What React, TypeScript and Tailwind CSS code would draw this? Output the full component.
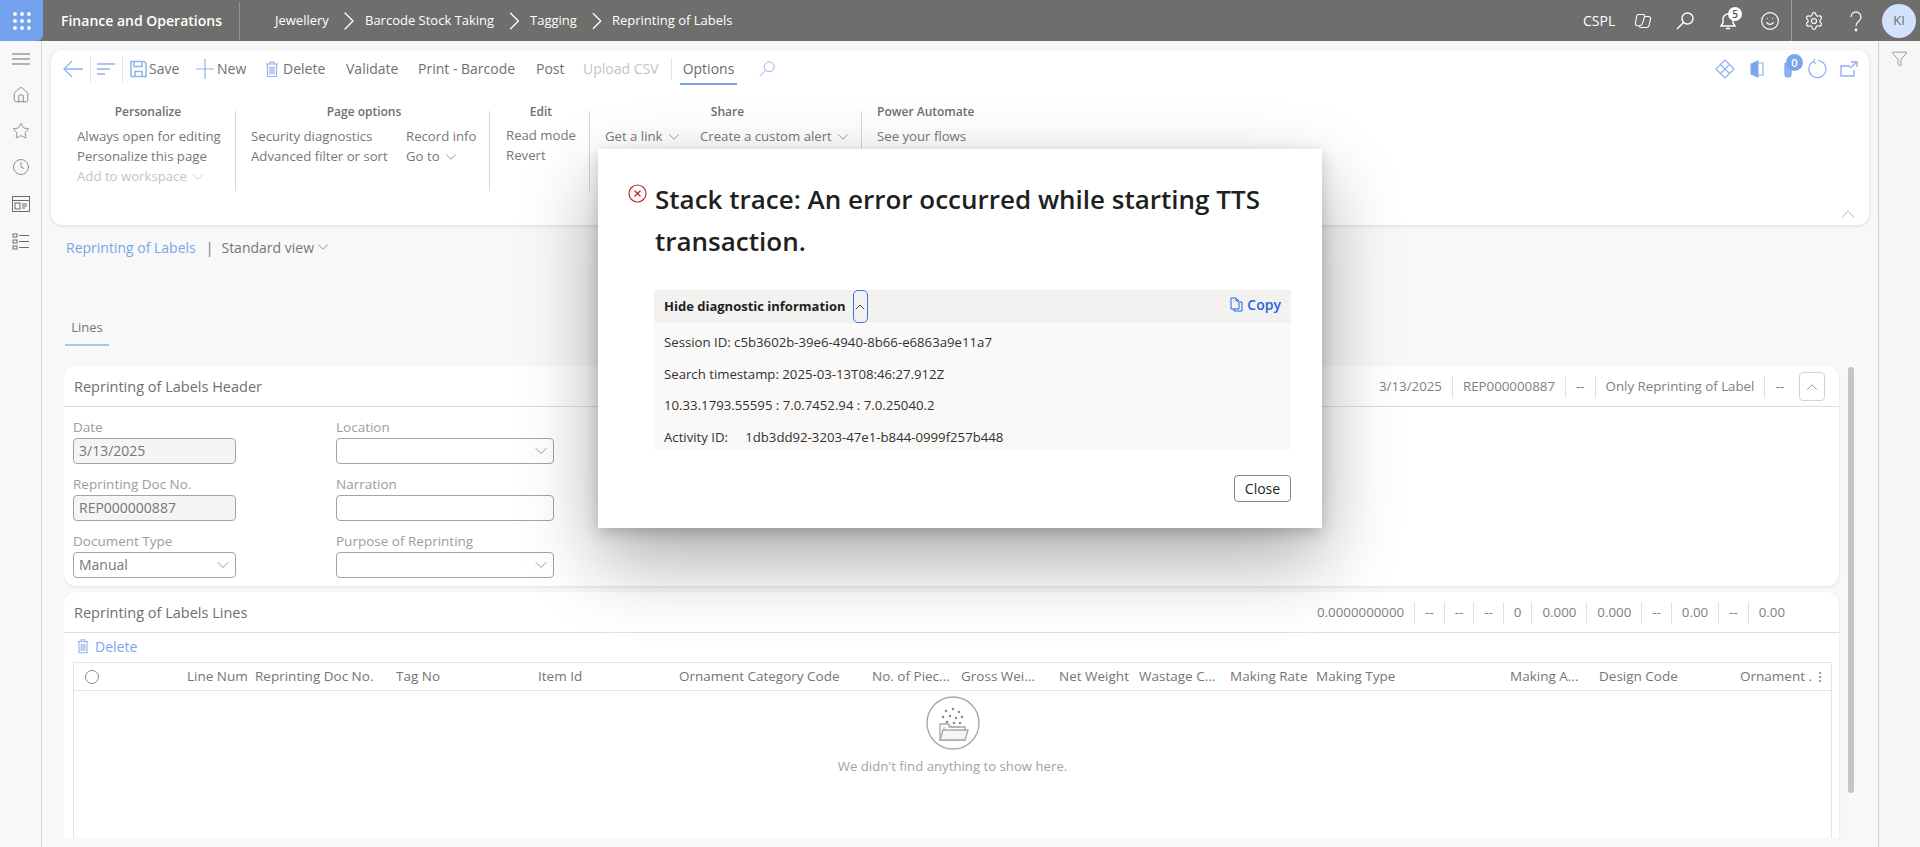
import React from "react";
import { ChevronDown, ChevronUp, ChevronRight, Home, Star, Clock, Settings, Smile, Filter, MoreVertical } from "lucide-react";

const font = { fontFamily: '"Open Sans","Noto Sans",sans-serif' };

function Lens({ size = 22, color = "currentColor", sw = 1.3 }: { size?: number; color?: string; sw?: number }) {
  return (
    <svg width={size} height={size} viewBox="0 0 20 20" fill="none" stroke={color} strokeWidth={sw}>
      <circle cx="12.5" cy="7.5" r="5.5" />
      <path d="M8.5 11.5 2 18" />
    </svg>
  );
}

function Trash({ size = 18, color = "#8fb2f0", className = "" }: { size?: number; color?: string; className?: string }) {
  return (
    <svg width={size} height={size} viewBox="0 0 18 18" fill="none" stroke={color} strokeWidth="1.2" className={className}>
      <path d="M3 4h12M7 4V2h4v2M4.5 4v12.5h9V4M7 6.5v8M9 6.5v8M11 6.5v8" />
    </svg>
  );
}

function TopBar() {
  return (
    <div className="flex h-[41px] shrink-0 items-center bg-[#6e6e6c] text-white">
      <div className="flex h-[41px] w-[43px] items-center justify-center rounded-br-[6px] bg-[#74a1ee]">
        <svg width="18" height="18" viewBox="0 0 18 18" fill="white">
          {[2, 9, 16].map((y) => [2, 9, 16].map((x) => <circle key={`${x}-${y}`} cx={x} cy={y} r="1.9" />))}
        </svg>
      </div>
      <span className="ml-[18px] w-[178px] text-[14px] font-semibold">Finance and Operations</span>
      <span className="h-[38px] w-px bg-[#8f8f8d]" />
      <nav className="ml-[35px] flex items-center text-[13px]">
        <span className="w-[58px]">Jewellery</span>
        <ChevronRight size={32} strokeWidth={1} className="w-[32px]" />
        <span className="w-[134px]">Barcode Stock Taking</span>
        <ChevronRight size={32} strokeWidth={1} className="w-[31px]" />
        <span className="w-[52px]">Tagging</span>
        <ChevronRight size={32} strokeWidth={1} className="w-[30px]" />
        <span>Reprinting of Labels</span>
      </nav>
      <div className="ml-auto flex items-center">
        <span className="w-[50px] text-[14px]">CSPL</span>
        <svg width="20" height="20" viewBox="0 0 20 20" fill="none" stroke="white" strokeWidth="1.1" className="mr-[22px]">
          <path d="M5.5 3.5h4.5c1.3 0 2 1 1.6 2.2l-2.2 7c-.4 1.300-1.400 2-2.600 2H4.500C2.800 14.700 2 13.500 2.500 12l1-6.500C3.800 4.200 4.500 3.500 5.500 3.500Z" />
          <path d="M11 5.500h4.500c1.400 0 2.300 1.100 2 2.500l-1.300 6c-.3 1.500-1.300 2.500-2.700 2.500H8c-1 0-1.600-.6-1.800-1.500" />
        </svg>
        <span className="mr-[23px]"><Lens size={20} color="white" sw={1.4} /></span>
        <span className="relative mr-[22px] flex w-[20px] justify-center">
          <svg width="18" height="20" viewBox="0 0 18 20" fill="none" stroke="white" strokeWidth="1.4">
            <path d="M9 3a5 5 0 0 0-5 5v4l-2 3h14l-2-3V8a5 5 0 0 0-5-5ZM7 17.500h4" />
          </svg>
          <span className="absolute -top-[4px] left-[10px] flex h-[14px] w-[14px] items-center justify-center rounded-full bg-white text-[10px] font-semibold leading-none text-[#555]">5</span>
        </span>
        <Smile size={20} strokeWidth={1.4} className="mr-[11px]" />
        <span className="h-[41px] w-px bg-[#9a9a98]" />
        <Settings size={20} strokeWidth={1.4} className="ml-[12px]" />
        <svg width="20" height="22" viewBox="0 0 20 22" fill="none" stroke="white" strokeWidth="1.2" className="ml-[22px]">
          <path d="M5 7a5 5 0 1 1 8 4c-2 1.500-3 2.400-3 5" />
          <circle cx="10" cy="20" r=".8" fill="white" />
        </svg>
        <span className="ml-[16px] mr-[4px] flex h-[34px] w-[34px] items-center justify-center rounded-full bg-[#d3e2fb] text-[13px] text-[#6e6e6c]">KI</span>
      </div>
    </div>
  );
}

function LeftNav() {
  const c = "#6d6d6d";
  return (
    <div className="flex w-[42px] shrink-0 flex-col items-center border-r border-[#d6d6d6] bg-[#f8f8f8] pt-[10px]">
      <svg width="18" height="16" viewBox="0 0 18 16" stroke={c} strokeWidth="1"><path d="M0 3h18M0 8h18M0 13h18" /></svg>
      <Home size={18} strokeWidth={1} color={c} className="mt-[19px]" />
      <Star size={18} strokeWidth={1} color={c} className="mt-[18px]" />
      <Clock size={18} strokeWidth={1} color={c} className="mt-[18px]" />
      <svg width="18" height="18" viewBox="0 0 18 18" fill="none" stroke={c} strokeWidth="1" className="mt-[19px]">
        <rect x=".5" y="1.500" width="17" height="15" /><path d="M.5 5.500h17" /><rect x="3" y="8" width="5" height="6" /><path d="M10 9h5M10 11h5M10 13h3" />
      </svg>
      <svg width="18" height="18" viewBox="0 0 18 18" fill="none" stroke={c} strokeWidth="1" className="mt-[19px]">
        <rect x="1" y="2" width="4" height="3" /><rect x="1" y="8" width="4" height="3" /><rect x="1" y="14" width="4" height="3" /><path d="M7 3.500h10M7 9.500h10M7 15.500h10" />
      </svg>
    </div>
  );
}

function Tool({ children, cls, disabled }: { children: React.ReactNode; cls: string; disabled?: boolean }) {
  return <span className={`${cls} ${disabled ? "text-[#c4c4c4]" : "text-[#707070]"} shrink-0 whitespace-nowrap text-[14px]`}>{children}</span>;
}

function Toolbar() {
  const blue = "#8fb2f0";
  return (
    <div className="flex h-[37px] items-center pl-[11px]">
      <svg width="22" height="20" viewBox="0 0 22 20" fill="none" stroke={blue} strokeWidth="1.3"><path d="M21 10H2M10 2 2 10l8 8" /></svg>
      <span className="ml-[6px] h-[26px] w-px bg-[#e2e2e2]" />
      <svg width="20" height="16" viewBox="0 0 20 16" stroke={blue} strokeWidth="1.6" className="ml-[5px]"><path d="M1 3h18M1 8h13M1 13h8" /></svg>
      <span className="ml-[6px] h-[26px] w-px bg-[#e2e2e2]" />
      <svg width="17" height="18" viewBox="0 0 17 18" fill="none" stroke={blue} strokeWidth="1.5" className="ml-[7px]">
        <path d="M1 1.500h13l2 2V16.500H1ZM4 1.500v5h8v-5M5 16.500v-5h7v5" />
      </svg>
      <Tool cls="ml-[2px] w-[45px]">Save</Tool>
      <svg width="22" height="22" viewBox="0 0 22 22" stroke={blue} strokeWidth="1.2"><path d="M11 1v20M2 11h18" /></svg>
      <Tool cls="ml-[1px] w-[46px]">New</Tool>
      <Trash />
      <Tool cls="ml-[2px] w-[63px]">Delete</Tool>
      <Tool cls="w-[72px]">Validate</Tool>
      <Tool cls="w-[118px]">Print - Barcode</Tool>
      <Tool cls="w-[47px]">Post</Tool>
      <Tool cls="w-[88px]" disabled>Upload CSV</Tool>
      <span className="h-[22px] w-px bg-[#e2e2e2]" />
      <span className="relative ml-[8px] flex h-[37px] w-[57px] items-center justify-center text-[14px] font-medium text-[#6b6b6b]">
        Options
        <span className="absolute bottom-[2px] left-0 right-0 h-[2px] bg-[#7aa5ee]" />
      </span>
      <span className="ml-[21px]"><Lens size={18} color={blue} sw={1.1} /></span>
      <div className="ml-auto mr-[11px] flex items-center">
        <svg width="20" height="20" viewBox="0 0 20 20" fill="none" stroke={blue} strokeWidth="1.2" className="mr-[-1px]">
          <path d="M10 1 19 10 10 19 1 10ZM5.500 5.500l9 9M14.500 5.500l-9 9" strokeLinejoin="round" />
        </svg>
        <svg width="16" height="18" viewBox="0 0 16 18" fill="none" stroke={blue} strokeWidth="1.2" className="ml-[15px]">
          <path d="M2 4 9 1v16L2 14Z" fill="#7aa5ee" /><path d="M9 3h5v12H9" />
        </svg>
        <span className="relative ml-[18px] flex w-[16px]">
          <svg width="10" height="20" viewBox="0 0 10 20" fill={blue} stroke="#7aa5ee" strokeWidth="1.2" className="mt-[1px]"><path d="M2 4v11a3 3 0 0 0 6 0V3" /></svg>
          <span className="absolute -top-[4px] left-[3px] flex h-[17px] w-[17px] items-center justify-center rounded-full bg-[#7aa5ee] text-[11px] font-semibold leading-none text-white">0</span>
        </span>
        <svg width="20" height="20" viewBox="0 0 20 20" fill="none" stroke={blue} strokeWidth="1.200" className="ml-[8px]">
          <path d="M6 2.800A8.500 8.500 0 1 0 11 1.600M6 2.800 8 0M6 2.800 9 4.500" />
        </svg>
        <svg width="18" height="16" viewBox="0 0 18 16" fill="none" stroke={blue} strokeWidth="1.4" className="ml-[13px]">
          <path d="M10 5H1v10h13V9M11 1h6v5M17 1l-7 6" />
        </svg>
      </div>
    </div>
  );
}

function GroupHead({ children, w }: { children: React.ReactNode; w: string }) {
  return <div className={`${w} h-[18px] text-center text-[12px] font-semibold leading-[18px] text-[#6f6f6f]`}>{children}</div>;
}
const Item = ({ children, gray }: { children: React.ReactNode; gray?: boolean }) => (
  <div className={`flex h-[20px] items-center whitespace-nowrap text-[13.2px] ${gray ? "text-[#c3c3c3]" : "text-[#777]"}`}>{children}</div>
);
const V = () => <ChevronDown size={18} strokeWidth={1} className="ml-[2px]" />;
const GSep = () => <span className="mt-[8px] h-[80px] w-px shrink-0 bg-[#d6d6d6]" />;

function Options() {
  return (
    <div className="mt-[17px] flex">
      <div className="w-[184px] shrink-0 pl-[26px]">
        <GroupHead w="w-[142px]">Personalize</GroupHead>
        <div className="mt-[6px]">
          <Item>Always open for editing</Item>
          <Item>Personalize this page</Item>
          <Item gray>Add to workspace<V /></Item>
        </div>
      </div>
      <GSep />
      <div className="w-[253px] shrink-0 pl-[15px]">
        <GroupHead w="w-[226px]">Page options</GroupHead>
        <div className="mt-[6px] flex">
          <div className="w-[155px]"><Item>Security diagnostics</Item><Item>Advanced filter or sort</Item></div>
          <div><Item>Record info</Item><Item>Go to<V /></Item></div>
        </div>
      </div>
      <GSep />
      <div className="w-[99px] shrink-0 pl-[16px]">
        <GroupHead w="w-[70px]">Edit</GroupHead>
        <div className="mt-[5px]"><Item>Read mode</Item><Item>Revert</Item></div>
      </div>
      <GSep />
      <div className="w-[271px] shrink-0 pl-[15px]">
        <GroupHead w="w-[245px]">Share</GroupHead>
        <div className="mt-[6px] flex">
          <div className="w-[95px]"><Item>Get a link<V /></Item></div>
          <Item>Create a custom alert<V /></Item>
        </div>
      </div>
      <GSep />
      <div className="pl-[15px]">
        <div className="h-[18px] text-[12px] font-semibold leading-[18px] text-[#6f6f6f]">Power Automate</div>
        <div className="mt-[6px]"><Item>See your flows</Item></div>
      </div>
    </div>
  );
}

function ActionCard() {
  return (
    <div className="relative mx-[9px] mt-[9px] h-[175px] shrink-0 rounded-[12px] bg-white shadow-[0_1px_4px_rgba(0,0,0,0.12)]">
      <Toolbar />
      <div className="-mt-[1px]"><Options /></div>
      <ChevronUp size={22} strokeWidth={0.9} color="#a0a0a0" className="absolute bottom-0 right-[10px]" />
    </div>
  );
}

function Field({ label, value, gray, dd, w }: { label: string; value?: string; gray?: boolean; dd?: boolean; w: string }) {
  return (
    <div className="h-[57px]">
      <div className="h-[20px] whitespace-nowrap text-[13.5px] leading-[18px] text-[#9c9c9c]">{label}</div>
      <div className={`flex h-[26px] ${w} items-center rounded-[4px] border border-[#a3a3a3] px-[5px] pb-px text-[14px] text-[#777] ${gray ? "bg-[#f5f5f5]" : "bg-white"}`}>
        <span>{value}</span>
        {dd && <ChevronDown size={20} strokeWidth={0.9} color="#777" className="ml-auto -mr-[3px]" />}
      </div>
    </div>
  );
}

function Summary({ items, btn }: { items: string[]; btn?: boolean }) {
  return (
    <div className="ml-auto flex items-center pt-px text-[13.3px] text-[#808080]">
      {items.map((t, i) => (
        <React.Fragment key={i}>
          {i > 0 && <span className="h-[22px] w-px bg-[#e0e0e0]" />}
          <span className="px-[10px]">{t}</span>
        </React.Fragment>
      ))}
      {btn ? (
        <span className="ml-[5px] mr-[14px] flex h-[29px] w-[26px] items-center justify-center rounded-[4px] border border-[#d4d4d4]">
          <ChevronUp size={18} strokeWidth={1} color="#777" />
        </span>
      ) : (
        <span className="w-[44px]" />
      )}
    </div>
  );
}

const cols: [string, string][] = [
  ["Line Num", "w-[68px]"],
  ["Reprinting Doc No.", "w-[141px]"],
  ["Tag No", "w-[142px]"],
  ["Item Id", "w-[141px]"],
  ["Ornament Category Code", "w-[193px]"],
  ["No. of Piec...", "w-[89px]"],
  ["Gross Wei...", "w-[98px]"],
  ["Net Weight", "w-[80px]"],
  ["Wastage C...", "w-[91px]"],
  ["Making Rate", "w-[86px]"],
  ["Making Type", "w-[194px]"],
  ["Making A...", "w-[89px]"],
  ["Design Code", "w-[141px]"],
  ["Ornament .", "w-[74px]"],
];

function HeaderCard() {
  return (
    <div className="h-[220px] rounded-[12px] bg-white shadow-[0_1px_3px_rgba(0,0,0,0.1)]">
      <div className="flex h-[41px] items-center border-b border-[#dedede] pl-[10px]">
        <span className="pt-px text-[14.5px] text-[#6f6f6f]">Reprinting of Labels Header</span>
        <Summary items={["3/13/2025", "REP000000887", "--", "Only Reprinting of Label", "--"]} btn />
      </div>
      <div className="grid grid-cols-[263px_1fr] pl-[9px] pt-[11px]">
        <div>
          <Field label="Date" value="3/13/2025" gray w="w-[163px]" />
          <Field label="Reprinting Doc No." value="REP000000887" gray w="w-[163px]" />
          <Field label="Document Type" value="Manual" dd w="w-[163px]" />
        </div>
        <div>
          <Field label="Location" dd w="w-[218px]" />
          <Field label="Narration" w="w-[218px]" />
          <Field label="Purpose of Reprinting" dd w="w-[218px]" />
        </div>
      </div>
    </div>
  );
}

function EmptyArt() {
  return (
    <svg width="54" height="54" viewBox="0 0 54 54" fill="none" stroke="#a8a8a8" strokeWidth="1.400">
      <circle cx="27" cy="27" r="26" />
      <path d="M14 28v16h25V31H25l-3-3Z" />
      <path d="M17 34h25l-3 10H14Z" fill="#f5f5f5" />
      <path d="M18 31v3M22 31h12" strokeWidth="1" />
      {[[20, 15], [27, 13], [33, 16], [17, 21], [24, 20], [30, 22], [36, 21], [21, 26], [28, 27], [34, 27]].map(([x, y]) => (
        <circle key={`${x}${y}`} cx={x} cy={y} r="1.300" fill="#8d8d8d" stroke="none" />
      ))}
    </svg>
  );
}

function LinesCard() {
  return (
    <div className="mt-[6px] h-[260px] rounded-t-[12px] bg-white shadow-[0_1px_3px_rgba(0,0,0,0.1)]">
      <div className="flex h-[41px] items-center border-b border-[#dedede] pl-[10px]">
        <span className="pt-px text-[14.5px] text-[#6f6f6f]">Reprinting of Labels Lines</span>
        <Summary items={["0.0000000000", "--", "--", "--", "0", "0.000", "0.000", "--", "0.00", "--", "0.00"]} />
      </div>
      <div className="flex h-[29px] items-start pl-[11px] pt-[3px] text-[14px] text-[#7aa5ee]">
        <Trash size={16} className="mt-[2px]" />
        <span className="ml-[4px]">Delete</span>
      </div>
      <div className="ml-[9px] mr-[7px] h-[190px] border border-b-0 border-[#e4e4e4]">
        <div className="flex h-[28px] items-center border-b border-[#e4e4e4] text-[13.5px] text-[#757575]">
          <span className="ml-[11px] mr-[88px] h-[14px] w-[14px] shrink-0 rounded-full border border-[#8a8a8a]" />
          {cols.map(([t, w]) => (
            <span key={t} className={`${w} shrink-0 overflow-hidden whitespace-nowrap`}>{t}</span>
          ))}
          <MoreVertical size={14} strokeWidth={1.5} color="#777" className="-ml-[1px]" />
        </div>
        <div className="flex flex-col items-center pt-[5px]">
          <EmptyArt />
          <div className="mt-[7px] text-[13.2px] text-[#a3a3a3]">We didn't find anything to show here.</div>
        </div>
      </div>
    </div>
  );
}

function Dialog() {
  const rows = [
    "Session ID: c5b3602b-39e6-4940-8b66-e6863a9e11a7",
    "Search timestamp: 2025-03-13T08:46:27.912Z",
    "10.33.1793.55595 : 7.0.7452.94 : 7.0.25040.2",
    "Activity ID:     1db3dd92-3203-47e1-b844-0999f257b448",
  ];
  return (
    <div className="absolute left-[598px] top-[149px] h-[379px] w-[724px] bg-white pl-[56px] pr-[31px] pt-[29px] shadow-[0_32px_72px_rgba(0,0,0,0.33),0_5px_14px_rgba(0,0,0,0.18)]">
      <svg width="19" height="19" viewBox="0 0 19 19" fill="none" stroke="#c4262e" strokeWidth="1.200" className="absolute left-[30px] top-[35px]">
        <circle cx="9.500" cy="9.500" r="8.500" /><path d="M6.500 6.500l6 6M12.500 6.500l-6 6" />
      </svg>
      <h1 className="pl-px text-[26px] font-semibold leading-[42px] text-[#201f1e]">Stack trace: An error occurred while starting TTS transaction.</h1>
      <div className="mt-[28px] h-[160px] bg-[#faf9f8]">
        <div className="flex h-[33px] items-center bg-[#f3f2f1] pl-[10px] pr-[10px]">
          <span className="pt-px text-[13px] font-bold text-[#201f1e]">Hide diagnostic information</span>
          <span className="ml-[7px] flex h-[33px] w-[15px] items-center justify-center rounded-[5px] border border-[#3b74e0]">
            <ChevronUp size={16} strokeWidth={1.2} color="#201f1e" className="shrink-0" />
          </span>
          <span className="ml-auto -mt-[4px] flex items-center text-[14px] font-semibold text-[#2266e3]">
            <svg width="13" height="15" viewBox="0 0 13 15" fill="none" stroke="#2266e3" strokeWidth="1" className="mr-[4px]">
              <path d="M1 1h5l3 3v8H1ZM6 1v3h3M10 5h2v9H4v-2" />
            </svg>
            Copy
          </span>
        </div>
        <div className="pl-[10px] pt-[4px]">
          {rows.map((r) => (
            <div key={r} className="flex h-[31.7px] items-center whitespace-pre text-[13.2px] text-[#323130]">{r}</div>
          ))}
        </div>
      </div>
      <div className="mt-[25px] flex justify-end">
        <span className="flex h-[27px] w-[57px] items-center justify-center rounded-[4px] border border-[#8a8886] text-[14px] text-[#201f1e]">Close</span>
      </div>
    </div>
  );
}

export default function App() {
  return (
    <div className="relative flex h-[847px] w-[1920px] flex-col overflow-hidden bg-[#f8f8f8]" style={font}>
      <TopBar />
      <div className="flex min-h-0 flex-1">
        <LeftNav />
        <div className="flex min-w-0 flex-1 flex-col">
          <ActionCard />
          <div className="ml-[24px] mt-[11px] flex h-[22px] items-center text-[14px]">
            <span className="text-[#7aa5ee]">Reprinting of Labels</span>
            <span className="ml-[10px] mr-[8px] text-[#777]">|</span>
            <span className="text-[#777]">Standard view</span>
            <ChevronDown size={18} strokeWidth={1} color="#777" className="ml-0" />
          </div>
          <div className="ml-[23px] mt-[60px] flex h-[28px] w-[44px] shrink-0 items-start justify-center border-b-2 border-[#a9c3f2] text-[13px] text-[#777]">Lines</div>
          <div className="ml-[22px] mt-[20px] flex h-[472px] shrink-0 overflow-hidden pr-[26px]">
            <div className="w-[1775px] shrink-0">
              <HeaderCard />
              <LinesCard />
            </div>
            <div className="ml-[9px] mt-px h-[426px] w-[6px] shrink-0 rounded-full bg-[#c6c5c2]" />
          </div>
        </div>
        <div className="flex w-[42px] shrink-0 justify-center border-l border-[#d0d0d0] bg-[#f6f6f6] pt-[9px]">
          <Filter size={17} strokeWidth={1} color="#777" />
        </div>
      </div>
      <Dialog />
    </div>
  );
}
